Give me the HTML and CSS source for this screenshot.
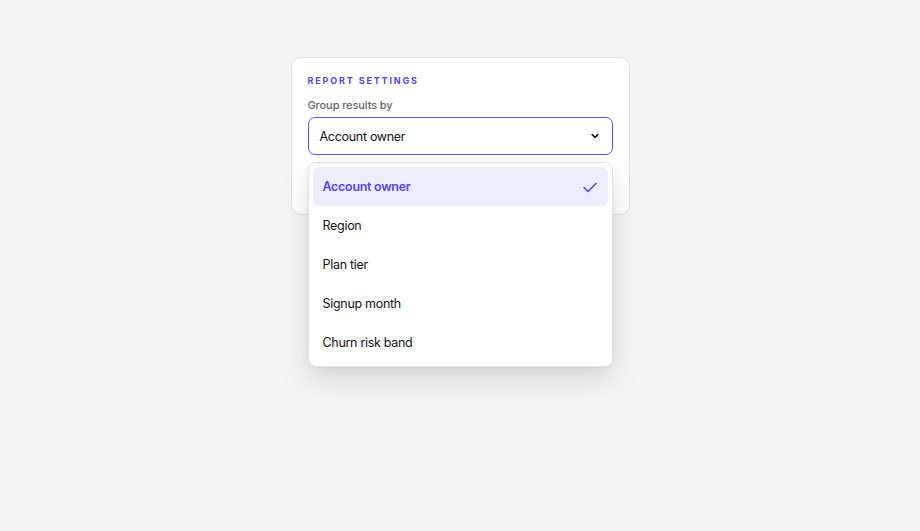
FILE: index.html
```html
<!DOCTYPE html>
<html lang="en">
    <head>
        <meta charset="utf-8" />
        <title>Report settings</title>
        <link rel="stylesheet" href="styles.css">
    </head>
    <body>
        <div class="page">
            <div class="card">
                <div class="eyebrow">Report settings</div>
                <label class="field-label">Group results by</label>
                <div class="select-wrap">
                    <button class="select">
                        <span>Account owner</span>
                        <svg width="10" height="10" viewBox="0 0 10 10"><path d="M2.2 3.6 L5 6.4 L7.8 3.6" fill="none" stroke="#111" stroke-width="1.5" stroke-linecap="round" stroke-linejoin="round"/></svg>
                    </button>
                    <ul class="menu">
                        <li class="option selected">
                            <span>Account owner</span>
                            <svg width="16" height="16" viewBox="0 0 16 16"><path d="M2 8.5 L6 12.5 L14 4.5" fill="none" stroke="#5b3ff0" stroke-width="1.6" stroke-linecap="round" stroke-linejoin="round"/></svg>
                        </li>
                        <li class="option">Region</li>
                        <li class="option">Plan tier</li>
                        <li class="option">Signup month</li>
                        <li class="option">Churn risk band</li>
                    </ul>
                </div>
            </div>
        </div>
    </body>
</html>
```

FILE: styles.css
```css
* {
    margin: 0;
    padding: 0;
    box-sizing: border-box;
}
body {
    background-color: #f5f5f5;
    font-family: Inter, "Noto Sans", sans-serif;
    color: #111;
}
.page {
    display: flex;
    justify-content: center;
    min-height: 100vh;
    padding-top: 57px;
}
.card {
    width: 339px;
    height: 158px;
    background: #fff;
    border: 1px solid #e0e0e0;
    border-radius: 10px;
    padding: 17px 16px 0 16px;
}
.eyebrow {
    font-size: 9px;
    font-weight: 700;
    letter-spacing: 1.85px;
    text-transform: uppercase;
    color: #5b3ff0;
    line-height: 12px;
}
.field-label {
    display: block;
    margin-top: 11px;
    font-size: 11px;
    font-weight: 500;
    letter-spacing: -0.1px;
    color: #666;
    line-height: 14px;
}
.select-wrap {
    position: relative;
    margin-top: 5px;
}
.select {
    display: flex;
    align-items: center;
    justify-content: space-between;
    width: 100%;
    height: 38px;
    padding: 0 12px 0 11px;
    background: #fff;
    border: 1px solid #6a4cf5;
    border-radius: 7px;
    font-family: inherit;
    font-size: 12.5px;
    letter-spacing: -0.3px;
    color: #111;
}
.menu {
    position: absolute;
    top: 45px;
    left: 0;
    right: 0;
    list-style: none;
    background: #fff;
    border: 1px solid #e3e3e3;
    border-radius: 8px;
    padding: 4px;
    box-shadow: 0 14px 30px rgba(0, 0, 0, 0.12), 0 2px 6px rgba(0, 0, 0, 0.05);
}
.option {
    display: flex;
    align-items: center;
    justify-content: space-between;
    height: 39px;
    padding: 0 10px 0 10px;
    font-size: 12.5px;
    letter-spacing: -0.3px;
    color: #111;
    border-radius: 6px;
}
.option.selected {
    background: #ebedfc;
    color: #5b3ff0;
    font-weight: 600;
}
```
